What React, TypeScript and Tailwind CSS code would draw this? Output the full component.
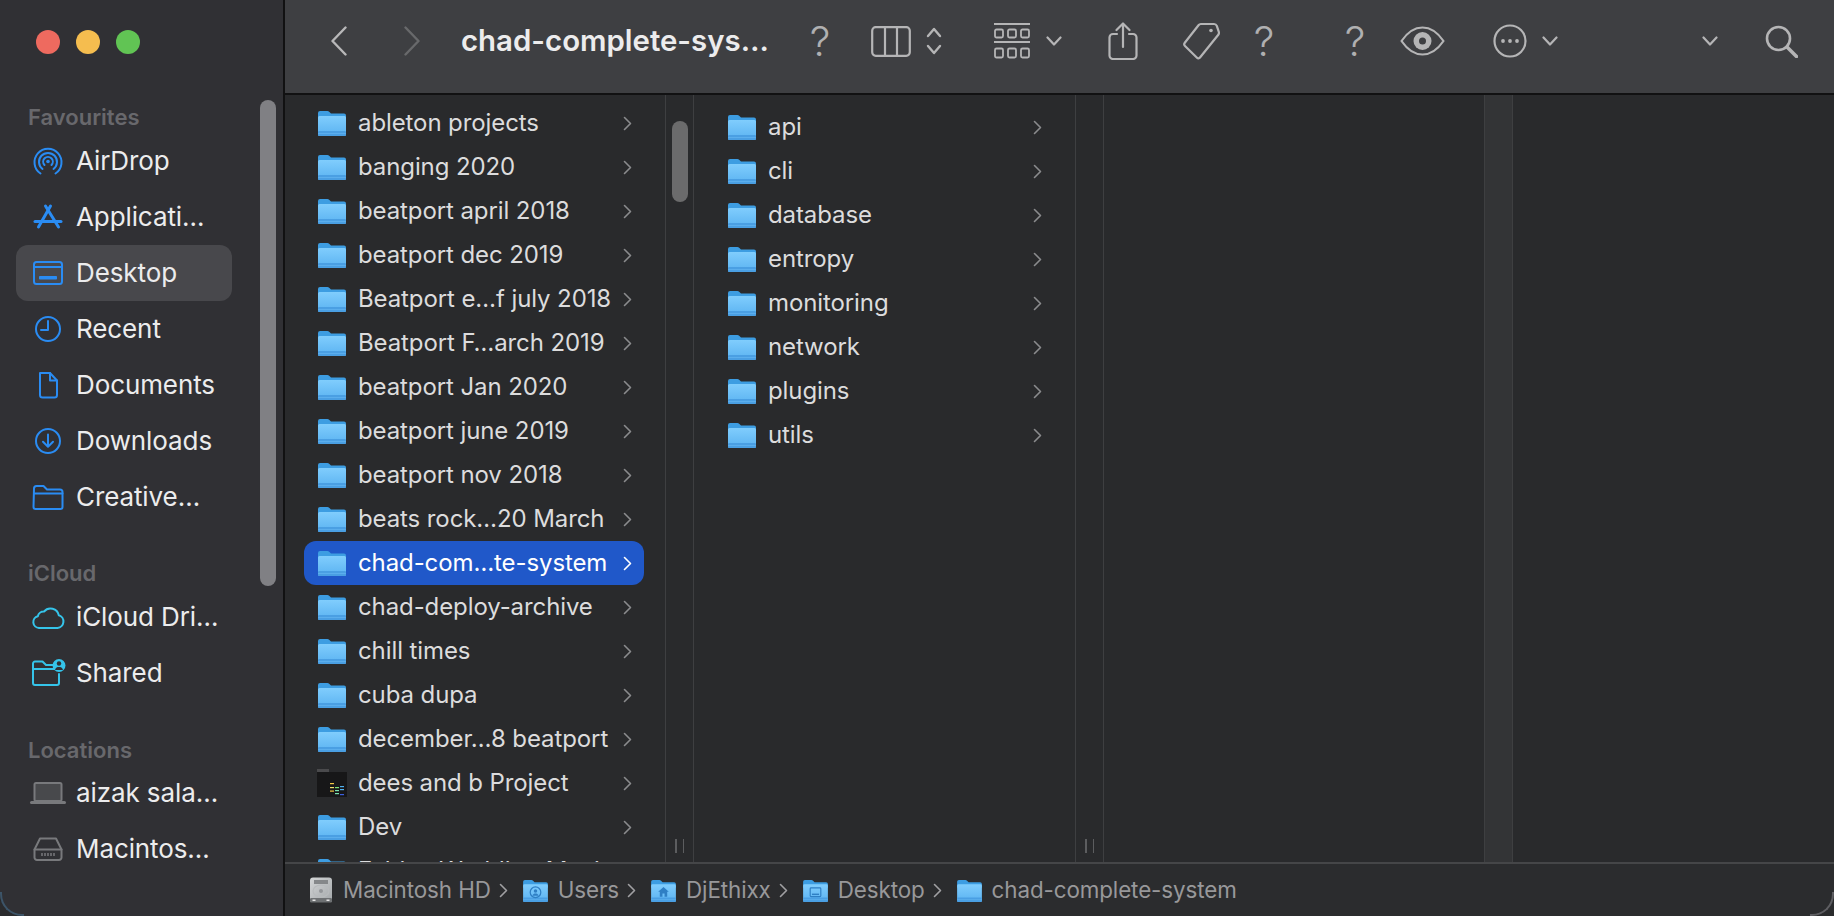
import React from "react";

const FONT = "font-['Inter','Liberation_Sans',sans-serif]";

function Folder({ w = 28, h = 26, badge, id = "f" }: { w?: number; h?: number; badge?: "person" | "home" | "desktop"; id?: string }) {
  return (
    <svg width={w} height={h} viewBox="0 0 28 26" className="shrink-0">
      <defs>
        <linearGradient id={id} x1="0" y1="0" x2="0" y2="1">
          <stop offset="0" stopColor="#80cdfd" />
          <stop offset="1" stopColor="#5ab2f1" />
        </linearGradient>
      </defs>
      <path d="M0 3a2 2 0 0 1 2-2h7.5a2 2 0 0 1 1.4.6L13 3.6h13a2 2 0 0 1 2 2V10H0z" fill="#3d9de2" />
      <path d="M0 7.5a1.5 1.5 0 0 1 1.5-1.5h25A1.5 1.5 0 0 1 28 7.5v17a1.5 1.5 0 0 1-1.5 1.5h-25A1.5 1.5 0 0 1 0 24.5z" fill={`url(#${id})`} />
      <rect x="0" y="21" width="28" height="5" rx="1.2" fill="#4a9fe3" />
      <rect x="0" y="23" width="28" height="0.8" fill="#5fb2ef" />
      {badge === "person" && (
        <g fill="#2f7fc4">
          <circle cx="14" cy="15" r="6" fill="none" stroke="#2f7fc4" strokeWidth="1.4" />
          <circle cx="14" cy="13.5" r="2" />
          <path d="M10.5 19c.6-2 2-2.6 3.5-2.6s2.9.6 3.5 2.6z" />
        </g>
      )}
      {badge === "home" && <path d="M14 9l6 5.5h-1.8V20h-3v-3.5h-2.4V20h-3v-5.5H8z" fill="#2f7fc4" />}
      {badge === "desktop" && (
        <g>
          <rect x="8" y="10" width="12" height="10" rx="1" fill="none" stroke="#2f7fc4" strokeWidth="1.3" />
          <rect x="10" y="16.5" width="8" height="1.6" fill="#2f7fc4" />
        </g>
      )}
    </svg>
  );
}

function ProjectIcon() {
  return (
    <svg width="30" height="28" viewBox="0 0 30 28" className="shrink-0">
      <rect x="0" y="0" width="12" height="4" fill="#4a4a4c" />
      <rect x="0" y="3" width="30" height="25" fill="#171718" />
      <rect x="13" y="14" width="4" height="1.2" fill="#f2c744" />
      <rect x="13" y="18" width="4" height="1.2" fill="#f2e16a" />
      <rect x="13" y="21.5" width="4" height="1.2" fill="#f2c744" />
      <rect x="18" y="18" width="4" height="1.2" fill="#7be37b" />
      <rect x="18" y="21" width="4" height="1.2" fill="#7be3b0" />
      <rect x="18" y="24" width="4" height="1.2" fill="#7be3b0" />
      <rect x="23" y="17" width="4" height="1.2" fill="#4fb0ee" />
      <rect x="23" y="20" width="4" height="1.2" fill="#4fb0ee" />
      <rect x="23" y="25" width="4" height="1.2" fill="#3b5fe0" />
    </svg>
  );
}

function HdIcon() {
  return (
    <svg width="24" height="26" viewBox="0 0 24 26" className="shrink-0">
      <defs>
        <linearGradient id="hd" x1="0" y1="0" x2="1" y2="1">
          <stop offset="0" stopColor="#d4d6d7" />
          <stop offset="1" stopColor="#a6aaac" />
        </linearGradient>
      </defs>
      <path d="M4 0.5h16a3 3 0 0 1 3 3V22H1V3.5a3 3 0 0 1 3-3z" fill="url(#hd)" />
      <rect x="1" y="21" width="22" height="4.5" rx="1.2" fill="#6e7173" />
      <rect x="5" y="3" width="14" height="4" fill="#85888a" />
      <ellipse cx="12" cy="14" rx="8" ry="6" fill="none" stroke="#b8bbbd" strokeWidth="1.2" />
      <circle cx="12" cy="14" r="2" fill="#94979a" />
      <rect x="3.5" y="22.5" width="3" height="1.5" fill="#e5e5e5" />
      <rect x="17.5" y="22.5" width="3" height="1.5" fill="#e5e5e5" />
    </svg>
  );
}

function Chevron({ color = "#8a8b8d" }: { color?: string }) {
  return (
    <svg width="9" height="15" viewBox="0 0 9 15" className="shrink-0">
      <path d="M1.5 1.5L7.5 7.5L1.5 13.5" fill="none" stroke={color} strokeWidth="1.6" strokeLinecap="round" strokeLinejoin="round" />
    </svg>
  );
}

function Row({ name, selected, project, id }: { name: string; selected?: boolean; project?: boolean; id: string }) {
  return (
    <div className={`h-[44px] flex items-center pl-[13px] pr-[12px] rounded-[12px] ${selected ? "bg-[#2058c9] text-white" : "text-[#dcdcdd]"}`}>
      <div className="w-[30px] flex justify-center shrink-0">{project ? <ProjectIcon /> : <Folder id={id} />}</div>
      <span className="ml-[11px] flex-1 whitespace-nowrap text-[24px] leading-[28px] tracking-[-0.1px]">{name}</span>
      <Chevron color={selected ? "#ffffff" : "#8a8b8d"} />
    </div>
  );
}

function Gutter({ thumb, handle = true, light }: { thumb?: boolean; handle?: boolean; light?: boolean }) {
  return (
    <div className={`w-[29px] shrink-0 border-x border-[#3e3f41] flex flex-col items-center justify-between pb-[9px] ${light ? "bg-[#333436]" : ""}`}>
      <div className={thumb ? "mt-[26px] w-[16px] h-[81px] rounded-full bg-[#6b6b6c]" : ""} />
      {handle && (
        <div className="flex gap-[6px]">
          <div className="w-[1.5px] h-[14px] bg-[#5c5d5f]" />
          <div className="w-[1.5px] h-[14px] bg-[#5c5d5f]" />
        </div>
      )}
    </div>
  );
}

const blue = "#2a8cf3";
const cyan = "#35c4ea";
const grey = "#78797c";

const SIcon = ({ children, w = 36, h = 30 }: { children: React.ReactNode; w?: number; h?: number }) => (
  <svg width={w} height={h} viewBox={`0 0 ${w} ${h}`} fill="none" strokeLinecap="round" strokeLinejoin="round" className="shrink-0">
    {children}
  </svg>
);

const AirDropI = () => (
  <SIcon>
    <g stroke={blue} strokeWidth="2">
      <path d="M10.5 27.5a13.5 13.5 0 1 1 15 0" />
      <path d="M12.5 23a9 9 0 1 1 11 0" />
      <path d="M14.5 19a4.8 4.8 0 1 1 7 0" />
    </g>
    <circle cx="18" cy="15.5" r="1.8" fill={blue} />
  </SIcon>
);
const AppI = () => (
  <SIcon>
    <g stroke={blue} strokeWidth="3">
      <path d="M15.5 4l13 21" />
      <path d="M20.5 4L8.500 25" />
      <path d="M5 19.500h26" />
    </g>
  </SIcon>
);
const DesktopI = () => (
  <SIcon>
    <rect x="4" y="4" width="28" height="22" rx="2.5" stroke={blue} strokeWidth="2" />
    <path d="M4 9h28" stroke={blue} strokeWidth="2" />
    <rect x="9" y="18" width="18" height="3.5" rx="0.8" fill={blue} />
  </SIcon>
);
const ClockI = () => (
  <SIcon>
    <circle cx="18" cy="15" r="12" stroke={blue} strokeWidth="2" />
    <path d="M18 7v9h-7" stroke={blue} strokeWidth="2" />
  </SIcon>
);
const DocI = () => (
  <SIcon>
    <path d="M10 3h10l7 7.5V25a2.5 2.5 0 0 1-2.5 2.5h-12A2.5 2.5 0 0 1 10 25z" stroke={blue} strokeWidth="2" />
    <path d="M20 3v7.5h7" stroke={blue} strokeWidth="2" />
  </SIcon>
);
const DownI = () => (
  <SIcon>
    <circle cx="18" cy="15" r="12" stroke={blue} strokeWidth="2" />
    <path d="M18 8.5v12M13 15.8l5 5 5-5" stroke={blue} strokeWidth="2" />
  </SIcon>
);
const FolderI = () => (
  <SIcon>
    <path d="M4 6.5A2.5 2.5 0 0 1 6.5 4h7l3.5 3.500h13A2.500 2.500 0 0 1 32.500 10v15a2 2 0 0 1-2 2h-25a2 2 0 0 1-2-2z" stroke={blue} strokeWidth="2" />
    <path d="M4 11.500h28.500" stroke={blue} strokeWidth="2" />
  </SIcon>
);
const CloudI = () => (
  <SIcon>
    <path d="M9 26a6 6 0 0 1-1.200-11.800A6 6 0 0 1 14 9.500a8.500 8.500 0 0 1 14.800 3.800A6.500 6.500 0 0 1 27.500 26z" stroke={cyan} strokeWidth="2" />
  </SIcon>
);
const SharedI = () => (
  <SIcon>
    <path d="M3 5.500A2 2 0 0 1 5 3.500h7.500L16 7h7M3 5.500V25a2 2 0 0 0 2 2h22a2 2 0 0 0 2-2v-9" stroke={cyan} strokeWidth="2" />
    <path d="M3 11h22" stroke={cyan} strokeWidth="2" />
    <circle cx="29" cy="7.500" r="6.500" fill={cyan} />
    <circle cx="29" cy="5.500" r="2.200" fill="#303034" />
    <path d="M25 12c.6-2.500 2.300-3 4-3s3.400.5 4 3z" fill="#303034" />
  </SIcon>
);
const LaptopI = () => (
  <SIcon w={38} h={24}>
    <rect x="5.500" y="2" width="27" height="18" rx="1.500" fill="#48494c" stroke={grey} strokeWidth="2" />
    <rect x="1" y="20" width="36" height="3" rx="1.500" fill={grey} />
  </SIcon>
);
const DriveI = () => (
  <SIcon>
    <path d="M10 4.500h16l5.500 11v8a2.500 2.500 0 0 1-2.500 2.500H7a2.500 2.500 0 0 1-2.500-2.500v-8z" stroke={grey} strokeWidth="2" />
    <path d="M4.500 15.500h27" stroke={grey} strokeWidth="2" />
    <path d="M12 19v3M15 19v3M18 19v3M21 19v3M24 19v3" stroke={grey} strokeWidth="1.500" strokeLinecap="butt" />
  </SIcon>
);

function SideItem({ icon, label, active }: { icon: React.ReactNode; label: string; active?: boolean }) {
  return (
    <div className={`h-[56px] mx-[16px] w-[216px] rounded-[12px] flex items-center pl-[14px] ${active ? "bg-[#48484c]" : ""}`}>
      <div className="w-[36px] flex justify-center shrink-0">{icon}</div>
      <span className="ml-[10px] text-[26px] leading-[30px] text-[#ececed] whitespace-nowrap tracking-[-0.1px]">{label}</span>
    </div>
  );
}

function SideHead({ label, cls }: { label: string; cls: string }) {
  return <div className={`h-[34px] ${cls} pl-[28px] flex items-center text-[22px] font-semibold text-[#68686c]`}>{label}</div>;
}

const T = { stroke: "#b5b5b6", strokeWidth: 2.2, fill: "none", strokeLinecap: "round" as const, strokeLinejoin: "round" as const };

const Q = () => (
  <span className="block w-[24px] text-center text-[41px] leading-[40px] font-light text-[#b0b0b1] shrink-0">?</span>
);
const DownChev = ({ cls = "" }: { cls?: string }) => (
  <svg width="16" height="10" viewBox="0 0 16 10" className={`shrink-0 ${cls}`}>
    <path d="M1.500 1.500L8 8.500l6.500-7" {...T} />
  </svg>
);

function Toolbar() {
  return (
    <div className="h-[95px] shrink-0 bg-[#3e3f42] border-b-2 border-[#111112] flex items-center pb-[11px]">
      <svg width="16" height="30" viewBox="0 0 16 30" className="ml-[46px] shrink-0">
        <path d="M14.500 1.500L1.500 15l13 13.500" {...T} stroke="#b8b8b9" strokeWidth="2.4" />
      </svg>
      <svg width="16" height="30" viewBox="0 0 16 30" className="ml-[57px] shrink-0">
        <path d="M1.500 1.500L14.500 15l-13 13.500" {...T} stroke="#68696b" strokeWidth="2.400" />
      </svg>
      <span className="ml-[41px] w-[305px] shrink-0 text-[29.400px] leading-[34px] font-semibold text-[#ececed] whitespace-nowrap">chad-complete-sys…</span>
      <div className="ml-[42px]"><Q /></div>
      <svg width="40" height="31" viewBox="0 0 40 31" className="ml-[39px] shrink-0">
        <rect x="1.200" y="1.200" width="37.600" height="28.600" rx="3.500" {...T} />
        <path d="M14 1.500v28M26 1.500v28" {...T} />
      </svg>
      <svg width="16" height="28" viewBox="0 0 16 28" className="ml-[15px] shrink-0">
        <path d="M2 9l6-7 6 7M2 19l6 7 6-7" {...T} strokeWidth="2.400" />
      </svg>
      <svg width="36" height="36" viewBox="0 0 36 36" className="ml-[52px] shrink-0">
        <path d="M0 1h36M0 19h36" stroke="#b5b5b6" strokeWidth="2.200" />
        <g stroke="#b5b5b6" strokeWidth="1.800" fill="none">
          <rect x="1" y="6.500" width="8" height="8" rx="1.500" />
          <rect x="14" y="6.500" width="8" height="8" rx="1.500" />
          <rect x="27" y="6.500" width="8" height="8" rx="1.500" />
          <rect x="1" y="25.500" width="8" height="9" rx="1.500" />
          <rect x="14" y="25.500" width="8" height="9" rx="1.500" />
          <rect x="27" y="25.500" width="8" height="9" rx="1.500" />
        </g>
      </svg>
      <DownChev cls="ml-[16px]" />
      <svg width="30" height="38" viewBox="0 0 30 38" className="ml-[46px] shrink-0">
        <path d="M9 12H5a3.500 3.500 0 0 0-3.500 3.500v18A3.500 3.500 0 0 0 5 37h20a3.500 3.500 0 0 0 3.500-3.500v-18A3.500 3.500 0 0 0 25 12h-4" {...T} />
        <path d="M15 25V2M8.500 8L15 1.500 21.500 8" {...T} />
      </svg>
      <svg width="38" height="38" viewBox="0 0 38 38" className="ml-[45px] shrink-0">
        <path d="M18 2h13a3 3 0 0 1 2.800 1.900l2 6a3 3 0 0 1-.5 2.800L17 35.500a2 2 0 0 1-3 .2L2 24a2.500 2.500 0 0 1-.2-3.300L15.500 3.200A3 3 0 0 1 18 2z" {...T} />
        <circle cx="28" cy="8.500" r="1.800" fill="#b5b5b6" />
      </svg>
      <div className="ml-[31px]"><Q /></div>
      <div className="ml-[67px]"><Q /></div>
      <svg width="45" height="30" viewBox="0 0 45 30" className="ml-[33px] shrink-0">
        <path d="M1.500 15C8 5.500 15 1.500 22.500 1.500S37 5.500 43.500 15C37 24.500 30 28.500 22.500 28.500S8 24.500 1.500 15z" {...T} />
        <circle cx="22.500" cy="15" r="9" fill="#b5b5b6" />
        <circle cx="22.500" cy="15" r="3.500" fill="#3e3f42" />
      </svg>
      <svg width="34" height="34" viewBox="0 0 34 34" className="ml-[48px] shrink-0">
        <circle cx="17" cy="17" r="15.500" {...T} />
        <circle cx="10" cy="17" r="1.900" fill="#b5b5b6" />
        <circle cx="17" cy="17" r="1.900" fill="#b5b5b6" />
        <circle cx="24" cy="17" r="1.900" fill="#b5b5b6" />
      </svg>
      <DownChev cls="ml-[15px]" />
      <DownChev cls="ml-[144px]" />
      <svg width="33" height="33" viewBox="0 0 33 33" className="ml-[47px] shrink-0">
        <circle cx="13.500" cy="13.500" r="11.500" {...T} strokeWidth="2.600" />
        <path d="M22 22l9.500 9.500" {...T} strokeWidth="3.600" />
      </svg>
    </div>
  );
}

const col1 = [
  "ableton projects",
  "banging 2020",
  "beatport april 2018",
  "beatport dec 2019",
  "Beatport e…f july 2018",
  "Beatport F…arch 2019",
  "beatport Jan 2020",
  "beatport june 2019",
  "beatport nov 2018",
  "beats rock…20 March",
  "chad-com…te-system",
  "chad-deploy-archive",
  "chill times",
  "cuba dupa",
  "december…8 beatport",
  "dees and b Project",
  "Dev",
  "Fabian Wedding Music",
];
const col2 = ["api", "cli", "database", "entropy", "monitoring", "network", "plugins", "utils"];

function Crumb({ icon, label, last }: { icon: React.ReactNode; label: string; last?: boolean }) {
  return (
    <div className="flex items-center">
      {icon}
      <span className="ml-[10px] text-[22.400px] leading-[28px] text-[#98989a] whitespace-nowrap tracking-[-0.1px]">{label}</span>
      {!last && (
        <div className="ml-[8px] mr-[15px] w-[9px]">
          <Chevron color="#a0a0a2" />
        </div>
      )}
    </div>
  );
}

export default function App() {
  return (
    <div className={`w-[1834px] h-[916px] bg-[#2a2b2d] relative overflow-hidden ${FONT}`}>
      <div className="w-full h-full flex overflow-hidden rounded-b-[22px]">
        <aside className="w-[283px] shrink-0 bg-[#303034] relative">
          <div className="h-[99px] flex gap-[16px] pl-[36px] pt-[30px]">
            <div className="w-[24px] h-[24px] rounded-full bg-[#ee6a5f]" />
            <div className="w-[24px] h-[24px] rounded-full bg-[#f5bd4f]" />
            <div className="w-[24px] h-[24px] rounded-full bg-[#61c454]" />
          </div>
          <SideHead label="Favourites" cls="pt-[2px]" />
          <SideItem icon={<AirDropI />} label="AirDrop" />
          <SideItem icon={<AppI />} label="Applicati…" />
          <SideItem icon={<DesktopI />} label="Desktop" active />
          <SideItem icon={<ClockI />} label="Recent" />
          <SideItem icon={<DocI />} label="Documents" />
          <SideItem icon={<DownI />} label="Downloads" />
          <SideItem icon={<FolderI />} label="Creative…" />
          <SideHead label="iCloud" cls="mt-[30px] pt-[2px]" />
          <SideItem icon={<CloudI />} label="iCloud Dri…" />
          <SideItem icon={<SharedI />} label="Shared" />
          <SideHead label="Locations" cls="mt-[30px] pt-[4px]" />
          <SideItem icon={<LaptopI />} label="aizak sala…" />
          <SideItem icon={<DriveI />} label="Macintos…" />
          <div className="absolute left-[260px] top-[100px] w-[16px] h-[486px] rounded-full bg-[#808084]" />
        </aside>
        <main className="flex-1 min-w-0 flex flex-col border-l-2 border-[#111112] bg-[#292a2c]">
          <Toolbar />
          <div className="flex-1 min-h-0 flex overflow-hidden">
            <div className="w-[380px] shrink-0 pt-[6px] pl-[19px] pr-[21px]">
              {col1.map((n, i) => (
                <Row key={n} id={`a${i}`} name={n} selected={i === 10} project={i === 15} />
              ))}
            </div>
            <Gutter thumb />
            <div className="w-[381px] shrink-0 pt-[10px] pl-[20px] pr-[21px]">
              {col2.map((n, i) => (
                <Row key={n} id={`b${i}`} name={n} />
              ))}
            </div>
            <Gutter />
            <div className="w-[380px] shrink-0" />
            <Gutter light handle={false} />
            <div className="flex-1" />
          </div>
          <div className="h-[54px] shrink-0 border-t-2 border-[#454648] bg-[#2b2c2e] flex items-center pl-[24px]">
            <Crumb icon={<HdIcon />} label="Macintosh HD" />
            <Crumb icon={<Folder w={25} h={23} badge="person" id="c1" />} label="Users" />
            <Crumb icon={<Folder w={25} h={23} badge="home" id="c2" />} label="DjEthixx" />
            <Crumb icon={<Folder w={25} h={23} badge="desktop" id="c3" />} label="Desktop" />
            <Crumb icon={<Folder w={25} h={23} id="c4" />} label="chad-complete-system" last />
          </div>
        </main>
      </div>
      <div className="absolute right-0 bottom-0 w-[24px] h-[24px] rounded-br-[22px] border-r-2 border-b-2 border-[#5e5e62]" />
      <div className="absolute left-0 bottom-0 w-[24px] h-[24px] rounded-bl-[22px] border-l-2 border-b-2 border-[#3c5468]" />
    </div>
  );
}
